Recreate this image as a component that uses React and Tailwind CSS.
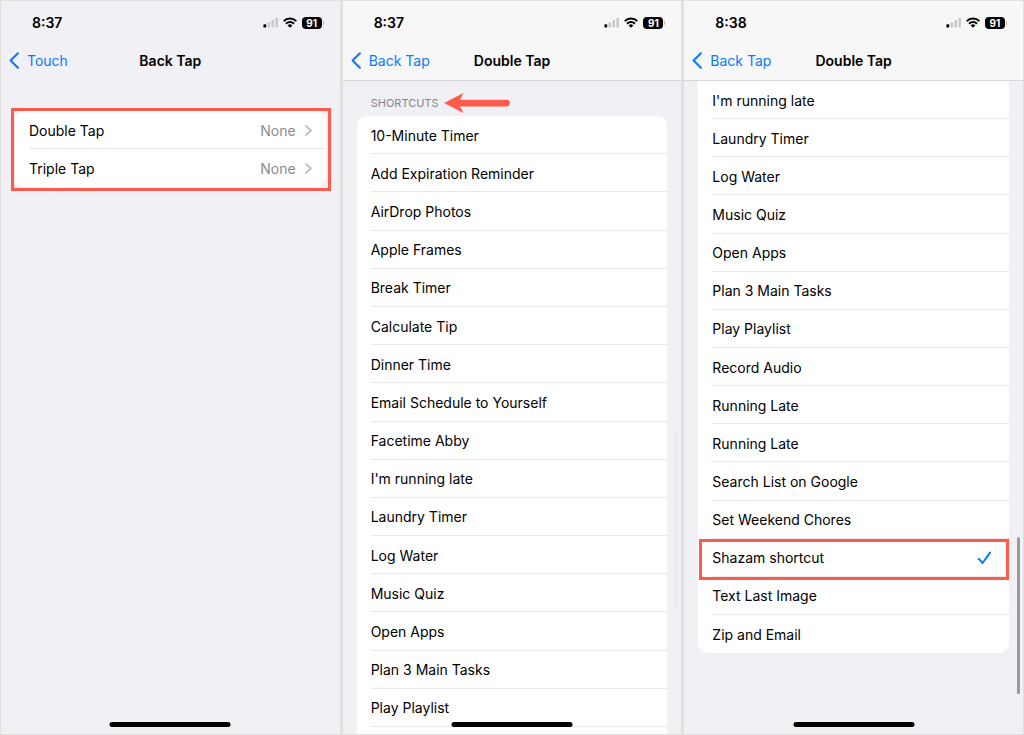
import React, { useState } from 'react';

const tapOptions = [
    { name: 'Double Tap', value: 'None' },
    { name: 'Triple Tap', value: 'None' },
];

const topShortcuts = [
    '10-Minute Timer',
    'Add Expiration Reminder',
    'AirDrop Photos',
    'Apple Frames',
    'Break Timer',
    'Calculate Tip',
    'Dinner Time',
    'Email Schedule to Yourself',
    'Facetime Abby',
    "I'm running late",
    'Laundry Timer',
    'Log Water',
    'Music Quiz',
    'Open Apps',
    'Plan 3 Main Tasks',
    'Play Playlist',
];

const bottomShortcuts = [
    "I'm running late",
    'Laundry Timer',
    'Log Water',
    'Music Quiz',
    'Open Apps',
    'Plan 3 Main Tasks',
    'Play Playlist',
    'Record Audio',
    'Running Late',
    'Running Late',
    'Search List on Google',
    'Set Weekend Chores',
    'Shazam shortcut',
    'Text Last Image',
    'Zip and Email',
];

const SignalIcon = () => (
    <svg width="16" height="11" viewBox="0 0 16 11" aria-hidden="true">
        <rect x="0.4" y="7.2" width="2.8" height="3.4" rx="0.8" fill="#000" />
        <rect x="4.4" y="5.2" width="2.6" height="5.4" rx="0.8" fill="#c9c9cd" />
        <rect x="8.4" y="3" width="2.6" height="7.6" rx="0.8" fill="#c9c9cd" />
        <rect x="12.4" y="0.8" width="2.6" height="9.8" rx="0.8" fill="#c9c9cd" />
    </svg>
);

const WifiIcon = () => (
    <svg width="14" height="11" viewBox="0 0 14 11" fill="none" stroke="#000" strokeWidth="2" aria-hidden="true">
        <path d="M0.7 4.1a9 9 0 0 1 12.6 0" />
        <path d="M3 6.7a5.7 5.7 0 0 1 8 0" />
        <path d="M7 10.8 4.7 8.5a3.2 3.2 0 0 1 4.6 0z" fill="#000" stroke="none" />
    </svg>
);

const StatusBar = ({ time }) => (
    <div className="flex h-[42px] items-center justify-between pr-4 pl-[31px] pt-px">
        <span className="text-[14px] leading-5 font-semibold">{time}</span>
        <div className="flex items-center gap-1">
            <SignalIcon />
            <WifiIcon />
            <div className="flex items-center gap-px pl-px">
                <span className="flex h-3 w-5 items-center justify-center rounded-[4px] bg-black text-[10px] leading-3 font-bold text-white">91</span>
                <span className="h-1 w-px rounded-r bg-[#b5b5b8]"></span>
            </div>
        </div>
    </div>
);

const NavBar = ({ back, title }) => (
    <nav className="grid h-[37px] grid-cols-[1fr_auto_1fr] items-center px-2 pb-0.5">
        <a href="#back" className="flex items-center gap-2 text-[14px] leading-5 text-[#0a7aff]">
            <svg width="10" height="17" viewBox="0 0 10 17" fill="none" stroke="currentColor" strokeWidth="2.1" strokeLinecap="round" strokeLinejoin="round" aria-hidden="true">
                <path d="M8.9 1.3 1.6 8.5l7.3 7.2" />
            </svg>
            {back}
        </a>
        <h1 className="text-[14px] leading-5 font-semibold">{title}</h1>
    </nav>
);

const Phone = ({ time, back, title, scrolled, children }) => (
    <section className="relative flex min-w-0 flex-col bg-[#f1f0f5]">
        <header className={scrolled ? 'border-b border-[#d6d6da] bg-[#f7f7f7]' : 'border-b border-transparent'}>
            <StatusBar time={time} />
            <NavBar back={back} title={title} />
        </header>
        {children}
        <div className="absolute bottom-[7px] left-1/2 h-[5px] w-[121px] -translate-x-1/2 rounded-full bg-black"></div>
    </section>
);

const ShortcutList = ({ items, group, selected, onSelect, highlight, className }) => (
    <div role="radiogroup" aria-label="Shortcuts" className={`flex flex-1 flex-col bg-white ${className}`}>
        {items.map((name, i) => (
            <label key={i} className="relative flex min-h-9 flex-1 cursor-pointer pl-3.5">
                <input
                    type="radio"
                    name={group}
                    className="sr-only"
                    checked={selected === i}
                    onChange={() => onSelect(i)}
                />
                <span className="flex flex-1 items-center justify-between border-b border-[#e9e9eb] pt-0.5 pr-[17px] text-[14px] leading-5">
                    {name}
                    {selected === i && (
                        <svg width="15" height="14" viewBox="0 0 15 14" fill="none" stroke="#0a7aff" strokeWidth="2" strokeLinecap="round" strokeLinejoin="round" aria-hidden="true">
                            <path d="M1.8 7.8 5.6 12 13 1.6" />
                        </svg>
                    )}
                </span>
                {highlight === i && (
                    <span className="pointer-events-none absolute top-0 right-0 -bottom-[3px] left-px z-10 border-3 border-[#ff5b4d]"></span>
                )}
            </label>
        ))}
    </div>
);

const BackTapScreen = () => (
    <Phone time="8:37" back="Touch" title="Back Tap">
        <div className="relative mx-3.5 mt-[30px] rounded-[10px] bg-white">
            {tapOptions.map((option) => (
                <button key={option.name} type="button" className="group flex h-[38px] w-full pl-3.5 text-left">
                    <span className="flex h-full flex-1 items-center border-b border-[#e9e9eb] pt-0.5 pr-3.5 text-[14px] leading-5 group-last-of-type:border-transparent">
                        <span className="flex-1">{option.name}</span>
                        <span className="mr-[9px] text-[#8b8b8f]">{option.value}</span>
                        <svg width="7" height="11" viewBox="0 0 7 11" fill="none" stroke="#bfbfc3" strokeWidth="1.7" strokeLinecap="round" strokeLinejoin="round" aria-hidden="true">
                            <path d="M1 1l5 4.5L1 10" />
                        </svg>
                    </span>
                </button>
            ))}
            <span className="pointer-events-none absolute -top-[3px] -right-[5px] -bottom-1 -left-1 border-3 border-[#ff5b4d]"></span>
        </div>
    </Phone>
);

const ShortcutsTopScreen = () => {
    const [selected, setSelected] = useState(-1);

    return (
        <Phone time="8:37" back="Back Tap" title="Double Tap" scrolled>
            <div className="flex h-[35px] items-center gap-[5px] pt-2 pl-7">
                <h2 className="text-[11px] leading-4 text-[#85858a]">SHORTCUTS</h2>
                <svg width="66" height="20" viewBox="0 0 66 20" fill="#ff5b4d" aria-hidden="true">
                    <path d="M0 10 19.5 0 16 6.7H62.5a3.4 3.4 0 0 1 0 6.8H16L19.5 20z" />
                </svg>
            </div>
            <div className="flex flex-1 flex-col px-3.5">
                <ShortcutList items={topShortcuts} group="shortcut-top" selected={selected} onSelect={setSelected} className="rounded-t-[10px]" />
                <div className="h-[7px] bg-white"></div>
            </div>
            <div className="absolute right-[3px] bottom-[126px] h-[176px] w-[3px] rounded-full bg-[#ebebef]"></div>
        </Phone>
    );
};

const ShortcutsBottomScreen = () => {
    const [selected, setSelected] = useState(12);

    return (
        <Phone time="8:38" back="Back Tap" title="Double Tap" scrolled>
            <div className="flex flex-1 flex-col px-3.5 pb-[81px]">
                <ShortcutList items={bottomShortcuts} group="shortcut-bottom" selected={selected} onSelect={setSelected} highlight={12} className="rounded-b-[10px] [&>label:last-child>span]:border-transparent" />
            </div>
            <div className="absolute right-[3px] bottom-10 h-[157px] w-[3px] rounded-full bg-[#9b9b9e]"></div>
        </Phone>
    );
};

const App = () => (
    <main className="grid min-h-screen grid-cols-3 gap-[3px] bg-[#e3dfdf] p-px font-['Inter','Liberation_Sans',sans-serif] text-black">
        <BackTapScreen />
        <ShortcutsTopScreen />
        <ShortcutsBottomScreen />
    </main>
);

export default App;
